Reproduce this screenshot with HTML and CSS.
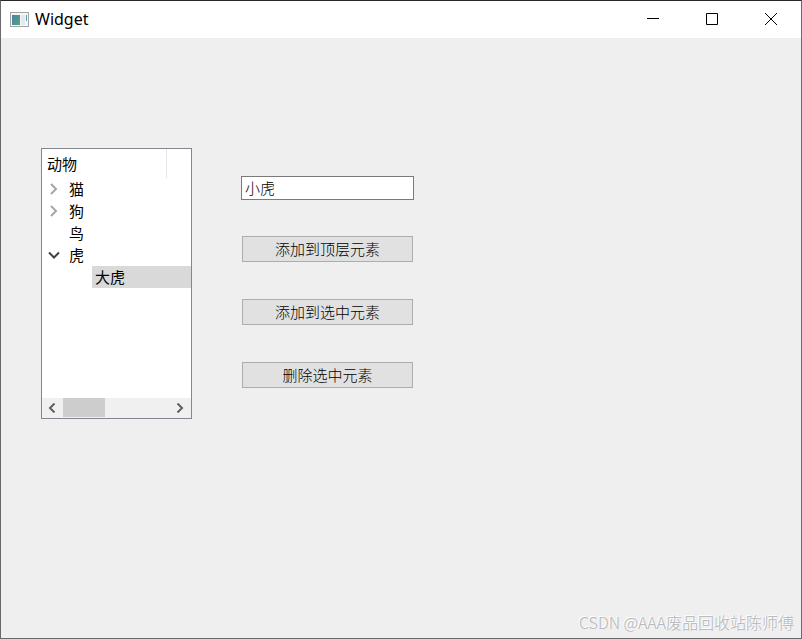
FILE: index.html
```html
<!DOCTYPE html>
<html lang="zh-CN">
<head>
    <meta charset="UTF-8">
    <meta name="viewport" content="width=device-width, initial-scale=1.0">
    <title>Widget</title>
    <link rel="stylesheet" href="styles.css">
</head>
<body>
    <div class="window">
        <!-- 标题栏 -->
        <header class="title-bar">
            <svg class="app-icon" width="19" height="15" viewBox="0 0 19 15" aria-hidden="true">
                <defs>
                    <linearGradient id="pane" x1="0" y1="0" x2="1" y2="1">
                        <stop offset="0" stop-color="#4a80ac"/>
                        <stop offset="1" stop-color="#55a678"/>
                    </linearGradient>
                </defs>
                <rect x="0.5" y="0.5" width="18" height="14" fill="#f6f6f6" stroke="#a0a5aa"/>
                <rect x="2" y="3" width="8" height="10" fill="url(#pane)"/>
                <rect x="11" y="3" width="4" height="10" fill="#e6e9ec"/>
                <rect x="16" y="3" width="1" height="6" fill="#5f9fa8"/>
            </svg>
            <h1 class="title">Widget</h1>
            <div class="window-buttons">
                <button type="button" class="window-button" aria-label="最小化">
                    <svg width="12" height="12" viewBox="0 0 12 12"><path d="M0 5.5H12"/></svg>
                </button>
                <button type="button" class="window-button" aria-label="最大化">
                    <svg width="12" height="12" viewBox="0 0 12 12"><path d="M0.5 0.5H11.5V11.5H0.5Z"/></svg>
                </button>
                <button type="button" class="window-button" aria-label="关闭">
                    <svg width="12" height="12" viewBox="0 0 12 12"><path d="M0 0L12 12M12 0L0 12"/></svg>
                </button>
            </div>
        </header>

        <main class="content">
            <!-- 树形列表 -->
            <section class="tree">
                <div class="tree-header">
                    <span class="tree-column">动物</span>
                </div>
                <ul class="tree-list">
                    <li class="tree-row">
                        <button type="button" class="toggle" aria-label="展开猫">
                            <svg width="12" height="12" viewBox="0 0 12 12"><path d="M3 1L8 6L3 11"/></svg>
                        </button>
                        <span class="tree-text">猫</span>
                    </li>
                    <li class="tree-row">
                        <button type="button" class="toggle" aria-label="展开狗">
                            <svg width="12" height="12" viewBox="0 0 12 12"><path d="M3 1L8 6L3 11"/></svg>
                        </button>
                        <span class="tree-text">狗</span>
                    </li>
                    <li class="tree-row">
                        <span class="toggle"></span>
                        <span class="tree-text">鸟</span>
                    </li>
                    <li>
                        <div class="tree-row">
                            <button type="button" class="toggle open" aria-label="折叠虎">
                                <svg width="12" height="12" viewBox="0 0 12 12"><path d="M1 3.5L6 8.5L11 3.5"/></svg>
                            </button>
                            <span class="tree-text">虎</span>
                        </div>
                        <ul class="tree-children">
                            <li class="tree-row selected"><span class="tree-text">大虎</span></li>
                        </ul>
                    </li>
                </ul>
                <div class="scroll-bar">
                    <button type="button" class="scroll-button" aria-label="向左滚动">
                        <svg width="11" height="10" viewBox="0 0 11 10"><path d="M7.5 0.5L3 5L7.5 9.5"/></svg>
                    </button>
                    <div class="scroll-track"><div class="scroll-thumb"></div></div>
                    <button type="button" class="scroll-button" aria-label="向右滚动">
                        <svg width="11" height="10" viewBox="0 0 11 10"><path d="M2.5 0.5L7 5L2.5 9.5"/></svg>
                    </button>
                </div>
            </section>

            <!-- 操作区 -->
            <form class="actions">
                <input class="name-input" type="text" value="小虎" aria-label="名称">
                <button type="button" class="action-button">添加到顶层元素</button>
                <button type="button" class="action-button">添加到选中元素</button>
                <button type="button" class="action-button">删除选中元素</button>
            </form>
        </main>

        <div class="watermark">CSDN @AAA废品回收站陈师傅</div>
    </div>
</body>
</html>
```
FILE: styles.css
```css
* {
    margin: 0;
    padding: 0;
    box-sizing: border-box;
}

body {
    font-family: "Noto Sans", "Noto Sans CJK SC", sans-serif;
    font-size: 15px;
    color: #000;
}

button,
input {
    font: inherit;
    color: inherit;
}

ul {
    list-style: none;
}

svg {
    display: block;
    fill: none;
}

.window {
    position: relative;
    display: flex;
    flex-direction: column;
    min-height: 100vh;
    background: #efefef;
    border: 1px solid #6b696b;
    border-top-color: #2b2729;
}

/* 标题栏 */
.title-bar {
    display: flex;
    align-items: center;
    height: 37px;
    padding: 0 1px 1px 9px;
    background: #fff;
}

.title {
    margin-left: 6px;
    font-size: 16px;
    line-height: 20px;
    font-weight: 400;
}

.window-buttons {
    display: flex;
    margin-left: auto;
}

.window-button {
    display: flex;
    align-items: center;
    justify-content: center;
    width: 59px;
    height: 36px;
    background: none;
    border: none;
    stroke: #000;
}

.content {
    display: flex;
    flex: 1;
    align-items: flex-start;
    gap: 49px;
    padding: 110px 40px;
}

/* 树形列表 */
.tree {
    display: flex;
    flex-direction: column;
    width: 151px;
    background: #fff;
    border: 1px solid #828790;
}

.tree-header {
    display: flex;
    height: 29px;
    line-height: 30px;
}

.tree-column {
    width: 125px;
    padding-left: 5px;
    border-right: 1px solid #e5e5e5;
}

.tree-list {
    min-height: 220px;
}

.tree-row {
    display: flex;
    height: 22px;
    line-height: 22px;
}

.tree-text {
    padding-left: 3px;
}

.tree-children {
    padding-left: 50px;
}

.selected {
    background: #d9d9d9;
}

.toggle {
    display: flex;
    align-items: center;
    justify-content: center;
    width: 24px;
    background: none;
    border: none;
    stroke: #a6a6a6;
    stroke-width: 2;
}

.toggle.open {
    stroke: #404040;
}

/* 滚动条 */
.scroll-bar {
    display: flex;
    height: 20px;
    background: #f0f0f0;
}

.scroll-button {
    display: flex;
    align-items: center;
    justify-content: center;
    width: 21px;
    padding-bottom: 1px;
    background: none;
    border: none;
    stroke: #606060;
    stroke-width: 2;
}

.scroll-track {
    flex: 1;
    padding-bottom: 1px;
}

.scroll-thumb {
    width: 42px;
    height: 100%;
    background: #cdcdcd;
}

/* 操作区 */
.actions {
    display: flex;
    flex-direction: column;
    width: 173px;
    padding-top: 28px;
    font-weight: 300;
}

.name-input {
    width: 100%;
    height: 24px;
    margin-bottom: 36px;
    padding: 0 3px 2px;
    background: #fff;
    border: 1px solid #7a7a7a;
}

.action-button {
    height: 26px;
    margin: 0 1px 37px;
    line-height: 24px;
    background: #e1e1e1;
    border: 1px solid #adadad;
}

/* 水印 */
.watermark {
    position: absolute;
    right: 7px;
    bottom: 4px;
    font-family: "Noto Sans CJK SC", sans-serif;
    font-size: 16px;
    font-weight: 300;
    color: #b4b4b4;
    text-shadow: -1px -1px 0 #fff;
}
```
